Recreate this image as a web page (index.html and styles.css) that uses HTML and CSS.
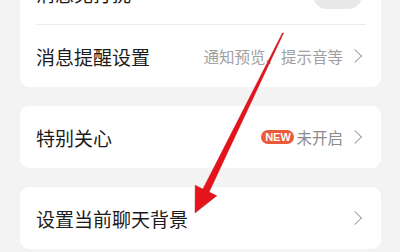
FILE: index.html
```html
<!DOCTYPE html>
<html lang="zh-CN">
<head>
<meta charset="utf-8">
<link rel="stylesheet" href="styles.css">
</head>
<body>
<div class="page">
  <div class="card first">
    <div class="row">
      <span class="label">消息免打扰</span>
      <span class="toggle"></span>
    </div>
    <div class="divider"></div>
    <div class="row">
      <span class="label">消息提醒设置</span>
      <span class="right"><span class="sub">通知预览、提示音等</span><span class="chev"></span></span>
    </div>
  </div>
  <div class="card">
    <div class="row">
      <span class="label">特别关心</span>
      <span class="right"><span class="badge">NEW</span><span class="sub dark">未开启</span><span class="chev"></span></span>
    </div>
  </div>
  <div class="card">
    <div class="row">
      <span class="label">设置当前聊天背景</span>
      <span class="right"><span class="chev"></span></span>
    </div>
  </div>
</div>
<svg class="arrow" width="400" height="252" viewBox="0 0 400 252">
  <polygon points="283.6,33 282.4,33 202.9,189 195.2,185.2 195,213 216.8,195.8 209.1,192" fill="#e5131b" stroke="#b80d12" stroke-width="0.4"/>
</svg>
</body>
</html>
```
FILE: styles.css
```css
html, body {
  margin: 0;
  padding: 0;
}
body {
  width: 400px;
  height: 252px;
  overflow: hidden;
  background: #f3f3f3;
  font-family: "Noto Sans CJK SC", "Noto Sans", sans-serif;
  position: relative;
}
.page {
  display: flex;
  flex-direction: column;
  gap: 19px;
  margin: -38px 19px 0 20px;
}
.card {
  background: #ffffff;
  border-radius: 9px;
  display: flex;
  flex-direction: column;
}
.row {
  height: 62px;
  display: flex;
  align-items: center;
  justify-content: space-between;
  padding: 0 17px 0 16px;
}
.label {
  font-size: 19px;
  color: #1c1c1c;
  line-height: 1;
  padding-top: 1px;
}
.divider {
  height: 1px;
  background: #ececec;
  margin: 0 15px 0 16px;
}
.toggle {
  width: 49px;
  height: 28px;
  border-radius: 14px;
  background: #e8e8e8;
  margin-right: 2px;
  margin-top: 4px;
}
.right {
  display: flex;
  align-items: center;
}
.sub {
  font-size: 15.5px;
  color: #a0a0a0;
  line-height: 1;
  padding-top: 1px;
}
.sub.dark {
  color: #8c8c8c;
}
.badge {
  background: #e9593a;
  color: #ffffff;
  font-family: "Liberation Sans", Arial, sans-serif;
  font-size: 11px;
  font-weight: bold;
  height: 14px;
  line-height: 14px;
  width: 33px;
  text-align: center;
  border-radius: 7px;
  margin-right: 2px;
}
.chev {
  width: 9px;
  height: 9px;
  border-top: 1.3px solid #a3a3a3;
  border-right: 1.3px solid #a3a3a3;
  transform: rotate(45deg);
  margin-left: 7px;
  margin-right: 4px;
}
.arrow {
  position: absolute;
  left: 0;
  top: 0;
}
```
